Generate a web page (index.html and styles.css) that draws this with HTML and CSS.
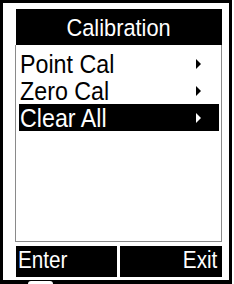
FILE: index.html
```html
<!DOCTYPE html>
<html>
<head>
<meta charset="utf-8">
<link rel="stylesheet" href="styles.css">
</head>
<body>
<div class="device">
  <div class="header"><span class="txt">Calibration</span></div>
  <div class="list">
    <div class="row"><span class="label">Point Cal</span><span class="arrow"></span></div>
    <div class="row"><span class="label">Zero Cal</span><span class="arrow"></span></div>
    <div class="row selected"><span class="label">Clear All</span><span class="arrow"></span></div>
  </div>
  <div class="footer">
    <div class="btn left"><span class="txt">Enter</span></div>
    <div class="btn right"><span class="txt">Exit</span></div>
  </div>
  <div class="knob"></div>
</div>
</body>
</html>
```

FILE: styles.css
```css
html, body {
  margin: 0;
  padding: 0;
  background: #fff;
  overflow: hidden;
}
body {
  width: 234px;
  height: 284px;
  font-family: "Liberation Sans", Arial, sans-serif;
}
.device {
  position: relative;
  box-sizing: border-box;
  width: 232px;
  height: 284px;
  border: 3px solid #000;
  border-bottom-width: 4px;
  padding: 6px 7px 0 12px;
  display: flex;
  flex-direction: column;
}
.header {
  background: #000;
  color: #fff;
  height: 36px;
  line-height: 36px;
  margin: 0 0 0 1px;
  text-align: center;
  font-size: 24.5px;
}
.header .txt {
  display: inline-block;
  position: relative;
  top: 1px;
  transform: scaleX(0.89);
}
.list {
  box-sizing: border-box;
  height: 197px;
  border: 1px solid #8a8a8a;
  border-top: none;
  padding: 5px 2px 0 3px;
  display: flex;
  flex-direction: column;
}
.row {
  height: 27px;
  display: flex;
  align-items: center;
  justify-content: space-between;
  padding: 0 18px 0 1px;
  font-size: 25px;
  line-height: 27px;
  color: #000;
}
.row .label {
  display: inline-block;
  position: relative;
  top: 1px;
  transform: scaleX(0.93);
  transform-origin: left center;
}
.row.selected {
  background: #000;
  color: #fff;
}
.arrow {
  width: 0;
  height: 0;
  border-left: 5px solid currentColor;
  border-top: 5px solid transparent;
  border-bottom: 5px solid transparent;
}
.footer {
  margin-top: 4px;
  margin-left: 1px;
  display: flex;
  gap: 3px;
  height: 31px;
}
.btn {
  background: #000;
  color: #fff;
  font-size: 23px;
  line-height: 31px;
  height: 31px;
}
.btn .txt {
  display: inline-block;
  position: relative;
  top: -1px;
  transform: scaleX(0.9);
}
.btn.left {
  width: 101px;
  padding-left: 2px;
  box-sizing: border-box;
}
.btn.left .txt {
  transform-origin: left center;
}
.btn.right {
  flex: 1;
  text-align: right;
  padding-right: 5px;
}
.btn.right .txt {
  transform-origin: right center;
}
.knob {
  position: absolute;
  left: 25px;
  bottom: -4px;
  width: 25px;
  height: 3px;
  background: #fff;
  border-radius: 6px 6px 0 0;
}
```
